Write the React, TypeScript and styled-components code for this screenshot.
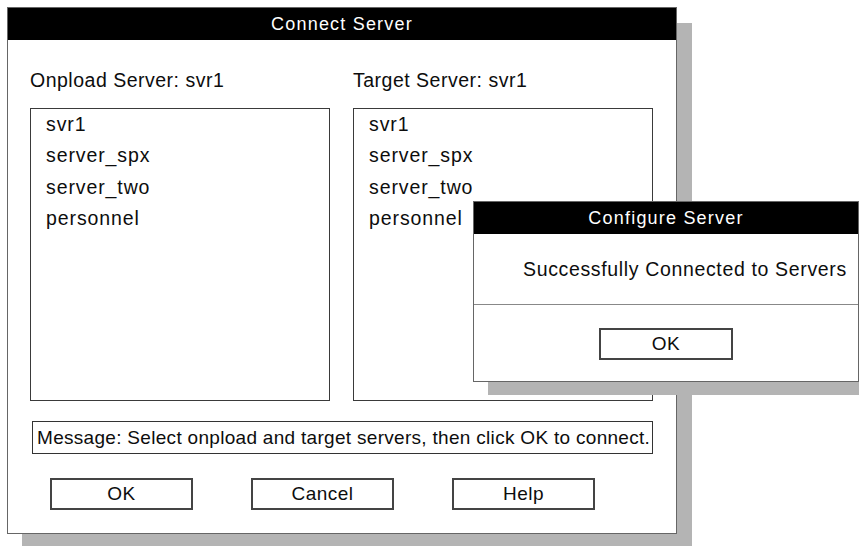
import styled, { createGlobalStyle } from 'styled-components';

const GlobalStyle = createGlobalStyle`
  body {
    margin: 0;
    background: #ffffff;
    font-family: 'Liberation Sans', Arial, Helvetica, sans-serif;
    color: #0d0d0d;
  }
`;

const Stage = styled.div`
  position: relative;
  width: 859px;
  height: 546px;
  overflow: hidden;
  padding: 7px 0 0 7px;
  box-sizing: border-box;
  background: #ffffff;
`;

const Window = styled.div`
  width: 670px;
  height: 527px;
  box-sizing: border-box;
  border: 1px solid #666;
  background: #ffffff;
  box-shadow: 15px 16px 0 #b4b4b4;
  display: flex;
  flex-direction: column;
`;

const TitleBar = styled.div<{ height: number }>`
  height: ${(p) => p.height}px;
  flex-shrink: 0;
  background: #000000;
  color: #ffffff;
  display: flex;
  align-items: center;
  justify-content: center;
  font-size: 18px;
  letter-spacing: 1.2px;
`;

const Body = styled.div`
  padding: 0 23px 0 22px;
  display: flex;
  flex-direction: column;
`;

const Columns = styled.div`
  display: grid;
  grid-template-columns: 300px 300px;
  column-gap: 23px;
  margin-top: 29px;
`;

const Column = styled.div`
  display: flex;
  flex-direction: column;
`;

const Label = styled.div`
  height: 22px;
  line-height: 22px;
  font-size: 19.5px;
  letter-spacing: 0.5px;
  margin-bottom: 17px;
`;

const ListBox = styled.div`
  height: 293px;
  box-sizing: border-box;
  border: 1.5px solid #3a3a3a;
  padding: 0 15px;
`;

const ListItem = styled.div`
  line-height: 31.3px;
  font-size: 19.5px;
  letter-spacing: 0.9px;
`;

const MessageBox = styled.div`
  margin: 20px 0 0 2px;
  width: 621px;
  height: 33px;
  box-sizing: border-box;
  border: 1.5px solid #333;
  padding-left: 4px;
  display: flex;
  align-items: center;
  font-size: 19px;
  letter-spacing: 0.3px;
  white-space: nowrap;
`;

const ButtonRow = styled.div`
  display: flex;
  gap: 58px;
  margin-top: 24px;
  padding-left: 20px;
`;

const Button = styled.div<{ width: number }>`
  width: ${(p) => p.width}px;
  height: 32px;
  box-sizing: border-box;
  border: 2px solid #444;
  display: flex;
  align-items: center;
  justify-content: center;
  font-size: 19px;
  letter-spacing: 0.5px;
`;

const Dialog = styled.div`
  position: absolute;
  left: 473px;
  top: 201px;
  width: 386px;
  height: 181px;
  box-sizing: border-box;
  border: 1px solid #666;
  background: #ffffff;
  box-shadow: 15px 13px 0 #b4b4b4;
  display: flex;
  flex-direction: column;
`;

const DialogMessage = styled.div`
  height: 71px;
  flex-shrink: 0;
  box-sizing: border-box;
  border-bottom: 1px solid #888;
  padding-left: 49px;
  display: flex;
  align-items: center;
  font-size: 19.5px;
  letter-spacing: 0.65px;
  white-space: nowrap;
`;

const DialogActions = styled.div`
  flex: 1;
  display: flex;
  justify-content: center;
  padding-top: 23px;
`;

const servers = ['svr1', 'server_spx', 'server_two', 'personnel'];

const ServerList = ({ label }: { label: string }) => (
  <Column>
    <Label>{label}</Label>
    <ListBox>
      {servers.map((s) => (
        <ListItem key={s}>{s}</ListItem>
      ))}
    </ListBox>
  </Column>
);

const App = () => {
  return (
    <>
      <GlobalStyle />
      <Stage>
        <Window>
          <TitleBar height={32}>Connect Server</TitleBar>
          <Body>
            <Columns>
              <ServerList label="Onpload Server: svr1" />
              <ServerList label="Target Server: svr1" />
            </Columns>
            <MessageBox>
              Message: Select onpload and target servers, then click OK to
              connect.
            </MessageBox>
            <ButtonRow>
              <Button width={143}>OK</Button>
              <Button width={143}>Cancel</Button>
              <Button width={143}>Help</Button>
            </ButtonRow>
          </Body>
        </Window>
        <Dialog>
          <TitleBar height={32}>Configure Server</TitleBar>
          <DialogMessage>Successfully Connected to Servers</DialogMessage>
          <DialogActions>
            <Button width={134}>OK</Button>
          </DialogActions>
        </Dialog>
      </Stage>
    </>
  );
};

export default App;
